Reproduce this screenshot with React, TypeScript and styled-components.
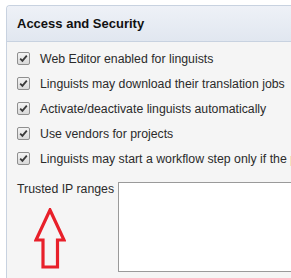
import React from 'react'
import styled, {createGlobalStyle} from 'styled-components'

const GlobalStyle = createGlobalStyle`
  html, body {
    margin: 0;
    padding: 0;
    background: #ffffff;
    overflow: hidden;
  }
  body {
    font-family: 'Liberation Sans', Arial, sans-serif;
  }
`

const Panel = styled.div`
  margin: 5px 0 0 6px;
  width: 420px;
  border: 1px solid #c8d2e0;
  border-right: none;
  border-top-left-radius: 4px;
  background: #f5f5f5;
  overflow: hidden;
`

const Header = styled.div`
  height: 35px;
  display: flex;
  align-items: center;
  padding-left: 10px;
  background: linear-gradient(#eef1f7, #e1e7f0);
  border-bottom: 1px solid #c8d2e0;
  font-size: 13px;
  font-weight: 700;
  color: #111;
`

const Body = styled.div`
  padding: 4px 0 0 10px;
  height: 240px;
`

const Row = styled.label`
  display: flex;
  align-items: center;
  gap: 10px;
  height: 25px;
  font-size: 12.3px;
  color: #2b2b2b;
  white-space: nowrap;
`

const Box = styled.span`
  width: 11px;
  height: 11px;
  border: 1px solid #8f8f8f;
  border-radius: 2px;
  background: linear-gradient(#f4f4f4, #d9d9d9);
  display: flex;
  align-items: center;
  justify-content: center;
  flex-shrink: 0;
`

const IpRow = styled.div`
  display: flex;
  gap: 2px;
  margin-top: 11px;
`

const IpLabel = styled.div`
  display: flex;
  flex-direction: column;
  align-items: flex-start;
  width: 99px;
  font-size: 12.3px;
  color: #2b2b2b;
  white-space: nowrap;
`

const LabelText = styled.span`
  margin-top: 0;
  line-height: 14px;
`

const IpInput = styled.div`
  width: 300px;
  height: 88px;
  border: 1px solid #9a9a9a;
  background: #ffffff;
`

const Arrow = styled.svg`
  margin: 12px 0 0 17px;
`

const options = [
  'Web Editor enabled for linguists',
  'Linguists may download their translation jobs',
  'Activate/deactivate linguists automatically',
  'Use vendors for projects',
  'Linguists may start a workflow step only if the previous step is finished',
]

const Check: React.FC = () => (
  <Box>
    <svg width="9" height="9" viewBox="0 0 9 9">
      <path d="M1.2 4.6 L3.4 6.8 L7.8 1.6" fill="none" stroke="#3a3a3a" strokeWidth="1.8"/>
    </svg>
  </Box>
)

const App: React.FC = () => {
  return <>
    <GlobalStyle/>
    <Panel>
      <Header>Access and Security</Header>
      <Body>
        {options.map(text => (
          <Row key={text}>
            <Check/>
            {text}
          </Row>
        ))}
        <IpRow>
          <IpLabel>
            <LabelText>Trusted IP ranges</LabelText>
            <Arrow width="32" height="62" viewBox="0 0 32 62">
              <path d="M16 2 L30 32 L23.5 32 L23.5 59 L9 59 L9 32 L2 32 Z" fill="none" stroke="#e8202a" strokeWidth="3.2" strokeLinejoin="miter"/>
            </Arrow>
          </IpLabel>
          <IpInput/>
        </IpRow>
      </Body>
    </Panel>
  </>
}

export default App
